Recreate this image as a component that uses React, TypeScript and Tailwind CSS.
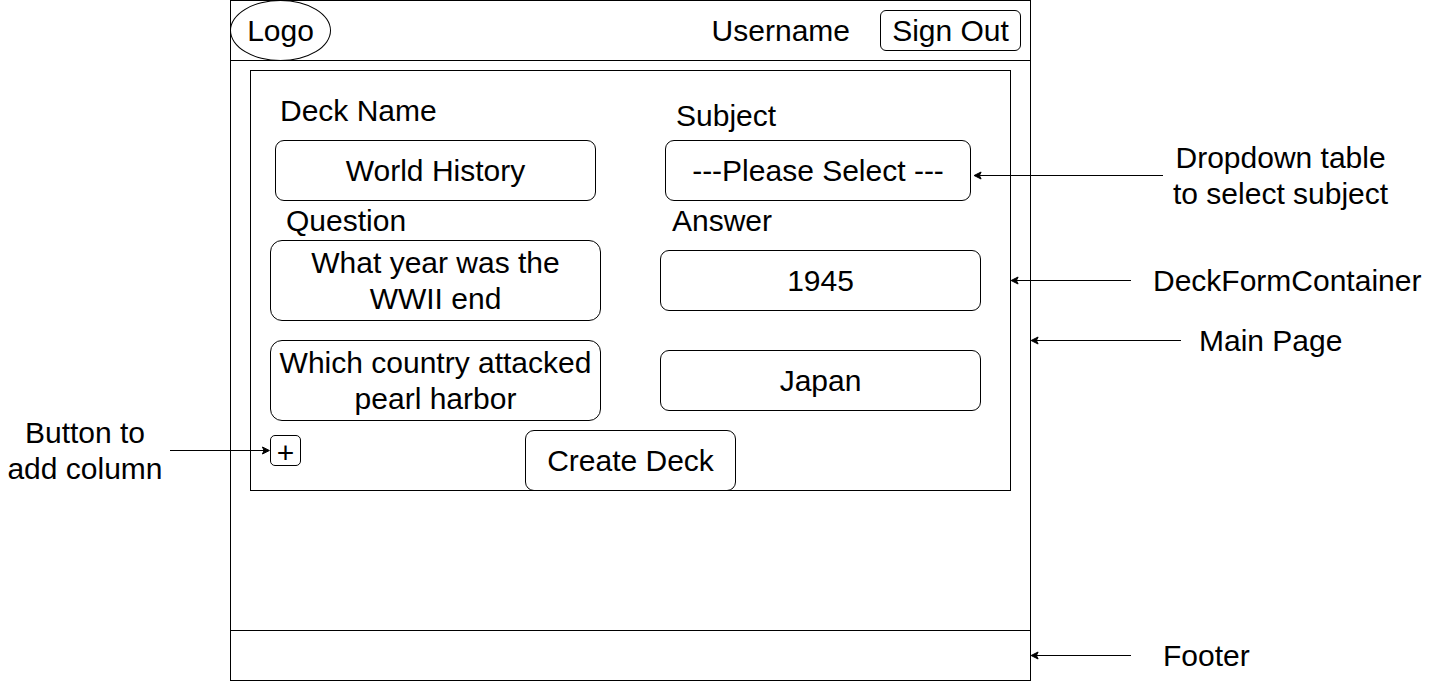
import type { ReactNode } from "react";

const fieldClass =
  "block border border-black bg-white text-center text-black outline-none";

function Arrow({
  length,
  direction = "left",
  className = "",
}: {
  length: number;
  direction?: "left" | "right";
  className?: string;
}) {
  const head =
    direction === "left"
      ? "M1.1 4.5 L8.1 1 L6.4 4.5 L8.1 8 Z"
      : `M${length - 1.6} 4.5 L${length - 8.6} 1 L${length - 6.9} 4.5 L${length - 8.6} 8 Z`;
  const line =
    direction === "left" ? `M6 4.5 H${length}` : `M0 4.5 H${length - 6}`;
  return (
    <svg
      width={length}
      height={10}
      aria-hidden="true"
      stroke="black"
      fill="black"
      className={`shrink-0 ${className}`}
    >
      <path d={line} />
      <path d={head} />
    </svg>
  );
}

function Note({
  length,
  arrowClass,
  className = "",
  children,
}: {
  length: number;
  arrowClass: string;
  className?: string;
  children: ReactNode;
}) {
  return (
    <div className={`flex items-center whitespace-nowrap ${className}`}>
      <Arrow length={length} className={arrowClass} />
      <p className="text-center">{children}</p>
    </div>
  );
}

const cards = [
  { question: "What year was the WWII end", answer: "1945" },
  { question: "Which country attacked pearl harbor", answer: "Japan" },
];

function DeckForm() {
  return (
    <form
      className="border border-black"
      onSubmit={(event) => event.preventDefault()}
    >
      <div className="grid grid-cols-[331fr_321fr] gap-x-[59px] pr-[29px] pl-[19px]">
        <div className="flex h-[69px] items-start pt-[22px] pl-[10px]">
          <label htmlFor="deck-name">Deck Name</label>
        </div>
        <div className="flex h-[69px] items-start pt-[27px] pl-4">
          <label htmlFor="subject">Subject</label>
        </div>

        <div className="px-[5px]">
          <input
            id="deck-name"
            defaultValue="World History"
            className={`${fieldClass} h-[61px] w-full rounded-[9px]`}
          />
        </div>
        <div className="pr-[10px] pl-[5px]">
          <select
            id="subject"
            className={`${fieldClass} h-[61px] w-full appearance-none rounded-[9px] [text-align-last:center]`}
          >
            <option>---Please Select ---</option>
          </select>
        </div>

        <div className="flex h-[39px] items-start pt-[2px] pl-4">
          <label htmlFor="question-0">Question</label>
        </div>
        <div className="flex h-[39px] items-start pt-[2px] pl-3">
          <label htmlFor="answer-0">Answer</label>
        </div>
      </div>

      <div className="flex flex-col gap-[19px] pr-[29px] pl-[19px]">
        {cards.map((card, index) => (
          <div
            key={card.answer}
            className="grid grid-cols-[331fr_321fr] items-center gap-x-[59px]"
          >
            <textarea
              id={`question-${index}`}
              aria-label={`Question ${index + 1}`}
              rows={2}
              defaultValue={card.question}
              className={`${fieldClass} h-[81px] w-full resize-none overflow-hidden rounded-xl px-1 pt-1 pb-[3px]`}
            />
            <input
              id={`answer-${index}`}
              aria-label={`Answer ${index + 1}`}
              defaultValue={card.answer}
              className={`${fieldClass} h-[61px] w-full rounded-[9px]`}
            />
          </div>
        ))}
      </div>

      <div className="-mb-px grid grid-cols-[1fr_211px_1fr] pt-[9px]">
        <button
          type="button"
          aria-label="Add column"
          className="mt-[5px] ml-[19px] flex h-[31px] w-[31px] items-center justify-center rounded-[5px] border border-black pt-1"
        >
          +
        </button>
        <button
          type="submit"
          className="h-[61px] rounded-[9px] border border-black"
        >
          Create Deck
        </button>
      </div>
    </form>
  );
}

export default function App() {
  return (
    <div className="grid min-h-screen grid-cols-[230fr_801fr_410fr] bg-white font-['Liberation_Sans',Arial,sans-serif] text-[30px] leading-9 text-black">
      <aside className="min-w-0 pt-[415px]">
        <div className="flex items-center whitespace-nowrap">
          <p className="flex-1 text-center">
            Button to
            <br />
            add column
          </p>
          <Arrow length={101} direction="right" className="-mr-[41px]" />
        </div>
      </aside>

      <div className="flex min-w-0 flex-col border border-black">
        <header className="flex h-[60px] items-center border-b border-black pr-[9px]">
          <div className="-my-px -ml-px flex h-[61px] w-[101px] shrink-0 items-center justify-center rounded-[50%] border border-black">
            Logo
          </div>
          <span className="ml-auto">Username</span>
          <button
            type="button"
            className="ml-[30px] h-[41px] w-[141px] rounded-md border border-black"
          >
            Sign Out
          </button>
        </header>
        <main className="flex-1 px-[19px] pt-[9px]">
          <DeckForm />
        </main>
        <footer className="h-[50px] border-t border-black" />
      </div>

      <aside className="flex min-w-0 flex-col pt-[140px] pb-[7px]">
        <Note length={190} arrowClass="-ml-[58px] mr-[10px]">
          Dropdown table
          <br />
          to select subject
        </Note>
        <Note length={121} arrowClass="-ml-[21px] mr-[22px]" className="mt-[51px]">
          DeckFormContainer
        </Note>
        <Note length={151} arrowClass="-ml-px mr-[18px]" className="mt-6">
          Main Page
        </Note>
        <Note length={101} arrowClass="-ml-px mr-8" className="mt-auto">
          Footer
        </Note>
      </aside>
    </div>
  );
}
